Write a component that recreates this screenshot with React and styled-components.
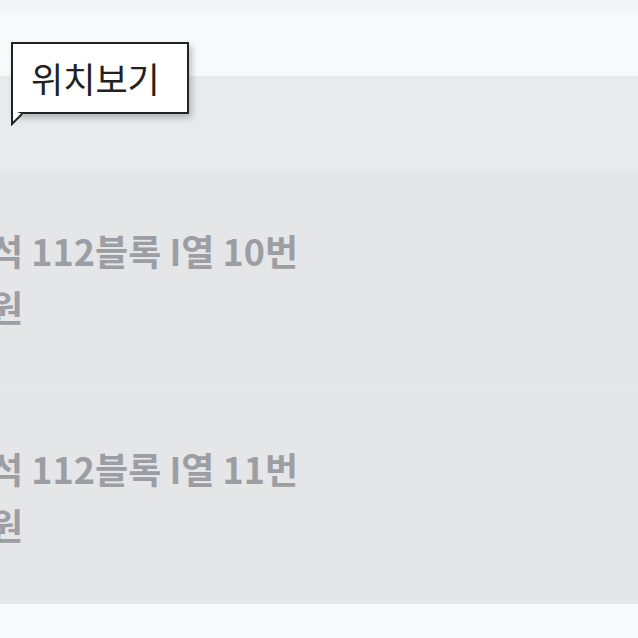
import React from "react";
import styled, { createGlobalStyle } from "styled-components";

const GlobalStyle = createGlobalStyle`
  body {
    margin: 0;
    background: #f8f9fb;
    font-family: "Noto Sans CJK KR", "Noto Sans", sans-serif;
  }
`;

const Page = styled.div`
  position: relative;
  width: 638px;
  height: 638px;
  overflow: hidden;
  display: flex;
  flex-direction: column;
  background: #f8f9fb;
`;

const TopBar = styled.div`
  height: 76px;
  flex: none;
  background: linear-gradient(#f4f5f7 0px, #f4f5f7 8px, #f6f7f9 14px, #f8f9fb 18px);
`;

const MapPanel = styled.div`
  height: 95px;
  flex: none;
  background: #e9eaee;
`;

const SeatRow = styled.div`
  height: ${(p) => p.h}px;
  flex: none;
  background: #e5e6e8;
  display: flex;
  flex-direction: column;
  justify-content: center;
  border-bottom: ${(p) => (p.divider ? "2px solid #e8e9eb" : "none")};
  box-sizing: border-box;
`;

const Line = styled.div`
  margin-left: -10px;
  font-size: 36px;
  font-weight: 700;
  line-height: 56px;
  color: #9d9ea3;
  white-space: nowrap;
`;

const Filler = styled.div`
  flex: 1;
  background: #f8f9fb;
`;

const Bubble = styled.div`
  position: absolute;
  left: 11px;
  top: 42px;
  width: 178px;
  height: 72px;
  box-sizing: border-box;
  border: 2px solid #222;
  background: #fff;
  box-shadow: 3px 4px 6px rgba(0, 0, 0, 0.22);
  display: flex;
  align-items: center;
  padding-left: 18px;
  padding-bottom: 2px;
  font-size: 35px;
  color: #222;
`;

const Tail = styled.svg`
  position: absolute;
  left: -2px;
  top: 66px;
`;

const App = () => (
  <>
    <GlobalStyle />
    <Page>
      <TopBar />
      <MapPanel />
      <SeatRow h={216} divider>
        <Line>석 112블록 I열 10번</Line>
        <Line>원</Line>
      </SeatRow>
      <SeatRow h={217}>
        <Line>석 112블록 I열 11번</Line>
        <Line>원</Line>
      </SeatRow>
      <Filler />
      <Bubble>
        위치보기
        <Tail width="14" height="16" viewBox="0 0 14 16">
          <path d="M1 0 L1 14 L11 4 Z" fill="#fff" />
          <path d="M1 0 L1 14 L11 4" fill="none" stroke="#222" strokeWidth="2" />
        </Tail>
      </Bubble>
    </Page>
  </>
);

export default App;
